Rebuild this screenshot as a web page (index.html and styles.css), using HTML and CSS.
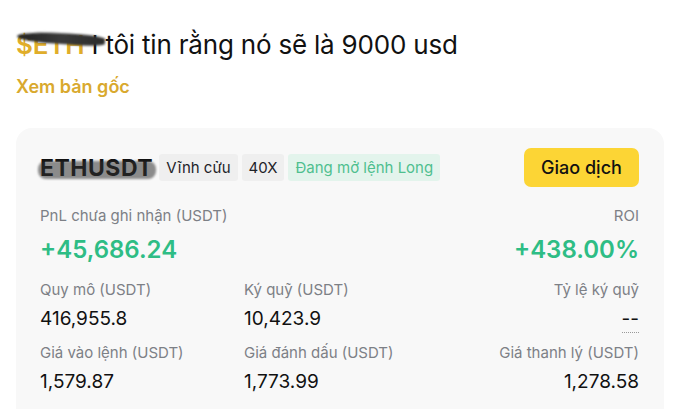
FILE: index.html
```html
<!DOCTYPE html>
<html lang="vi">
<head>
    <meta charset="UTF-8">
    <meta name="viewport" content="width=device-width, initial-scale=1.0">
    <title>Bài đăng</title>
    <link rel="stylesheet" href="styles.css">
</head>
<body>
    <div class="post">
        <p class="post-text">
            <span class="tag"><span class="tag-word">$ETH</span><span class="ink ink-title"></span></span>
            I tôi tin rằng nó sẽ là 9000 usd
        </p>
        <a class="original" href="#">Xem bản gốc</a>

        <div class="card">
            <div class="card-head">
                <div class="symbol-row">
                    <span class="symbol">ETHUSDT<span class="ink ink-symbol"></span></span>
                    <span class="chip">Vĩnh cửu</span>
                    <span class="chip">40X</span>
                    <span class="chip chip-long">Đang mở lệnh Long</span>
                </div>
                <button class="trade-btn">Giao dịch</button>
            </div>

            <div class="pnl-row">
                <div class="stat">
                    <div class="label">PnL chưa ghi nhận (USDT)</div>
                    <div class="big-value">+45,686.24</div>
                </div>
                <div class="stat right">
                    <div class="label">ROI</div>
                    <div class="big-value">+438.00%</div>
                </div>
            </div>

            <div class="grid">
                <div class="stat">
                    <div class="label">Quy mô (USDT)</div>
                    <div class="value">416,955.8</div>
                </div>
                <div class="stat">
                    <div class="label">Ký quỹ (USDT)</div>
                    <div class="value">10,423.9</div>
                </div>
                <div class="stat right">
                    <div class="label">Tỷ lệ ký quỹ</div>
                    <div class="value"><span class="dotted">--</span></div>
                </div>
                <div class="stat">
                    <div class="label">Giá vào lệnh (USDT)</div>
                    <div class="value">1,579.87</div>
                </div>
                <div class="stat">
                    <div class="label">Giá đánh dấu (USDT)</div>
                    <div class="value">1,773.99</div>
                </div>
                <div class="stat right">
                    <div class="label">Giá thanh lý (USDT)</div>
                    <div class="value">1,278.58</div>
                </div>
            </div>
        </div>
    </div>
</body>
</html>
```

FILE: styles.css
```css
body {
    margin: 0;
    background: #ffffff;
    font-family: 'Inter', 'Noto Sans', sans-serif;
    color: #1e2329;
    overflow: hidden;
}

.post {
    padding: 28px 16px 0 16px;
}

.post-text {
    margin: 0;
    font-size: 26px;
    line-height: 34px;
    color: #111;
    letter-spacing: -0.2px;
}

.tag {
    position: relative;
    display: inline-block;
}

.tag-word {
    color: #e0ad2a;
    font-weight: 600;
}

/* marker scribbles on top of the text */
.ink {
    position: absolute;
    filter: blur(1px);
}

.ink-title {
    left: 1px;
    top: 5px;
    width: 88px;
    height: 11px;
    border-radius: 60% 30% 30% 40%;
    background: linear-gradient(to right, #222, #3a3a3a 50%, #2c2c2c);
    transform: rotate(4deg);
}

.original {
    display: block;
    margin-top: 14px;
    font-size: 18px;
    font-weight: 600;
    color: #d9a92e;
    text-decoration: none;
}

.card {
    margin-top: 31px;
    background: #f8f8f8;
    border-radius: 16px;
    padding: 20px 25px 30px 24px;
    height: 300px;
}

.card-head {
    display: flex;
    justify-content: space-between;
    align-items: center;
}

.symbol-row {
    display: flex;
    align-items: center;
    gap: 4px;
}

.symbol {
    position: relative;
    font-size: 23px;
    font-weight: 700;
    color: #111;
    margin-right: 2px;
    letter-spacing: 0.5px;
}

.ink-symbol {
    left: -2px;
    top: 7px;
    width: 118px;
    height: 18px;
    background: rgba(50, 50, 50, 0.55);
    border-radius: 8px;
}

.chip {
    background: #efefef;
    color: #1e2329;
    font-size: 15px;
    padding: 0 7px;
    height: 27px;
    line-height: 27px;
    border-radius: 3px;
}

.chip-long {
    background: #e3f4ec;
    color: #4fbf8f;
}

.trade-btn {
    background: #fcd535;
    border: none;
    border-radius: 7px;
    font-family: inherit;
    font-size: 18px;
    font-weight: 500;
    color: #111;
    width: 115px;
    height: 39px;
    cursor: pointer;
}

.pnl-row {
    display: flex;
    justify-content: space-between;
    margin-top: 19px;
}

.label {
    font-size: 15px;
    color: #7d8086;
    line-height: 20px;
}

.big-value {
    font-size: 24px;
    font-weight: 600;
    color: #2ebd85;
    margin-top: 9px;
    line-height: 30px;
}

.grid {
    display: grid;
    grid-template-columns: 204px 1fr 1fr;
    row-gap: 11px;
    margin-top: 15px;
}

.value {
    font-size: 19px;
    color: #111;
    margin-top: 5px;
    line-height: 27px;
}

.right {
    text-align: right;
}

.dotted {
    border-bottom: 1px dotted #999;
    padding-bottom: 2px;
}
```
